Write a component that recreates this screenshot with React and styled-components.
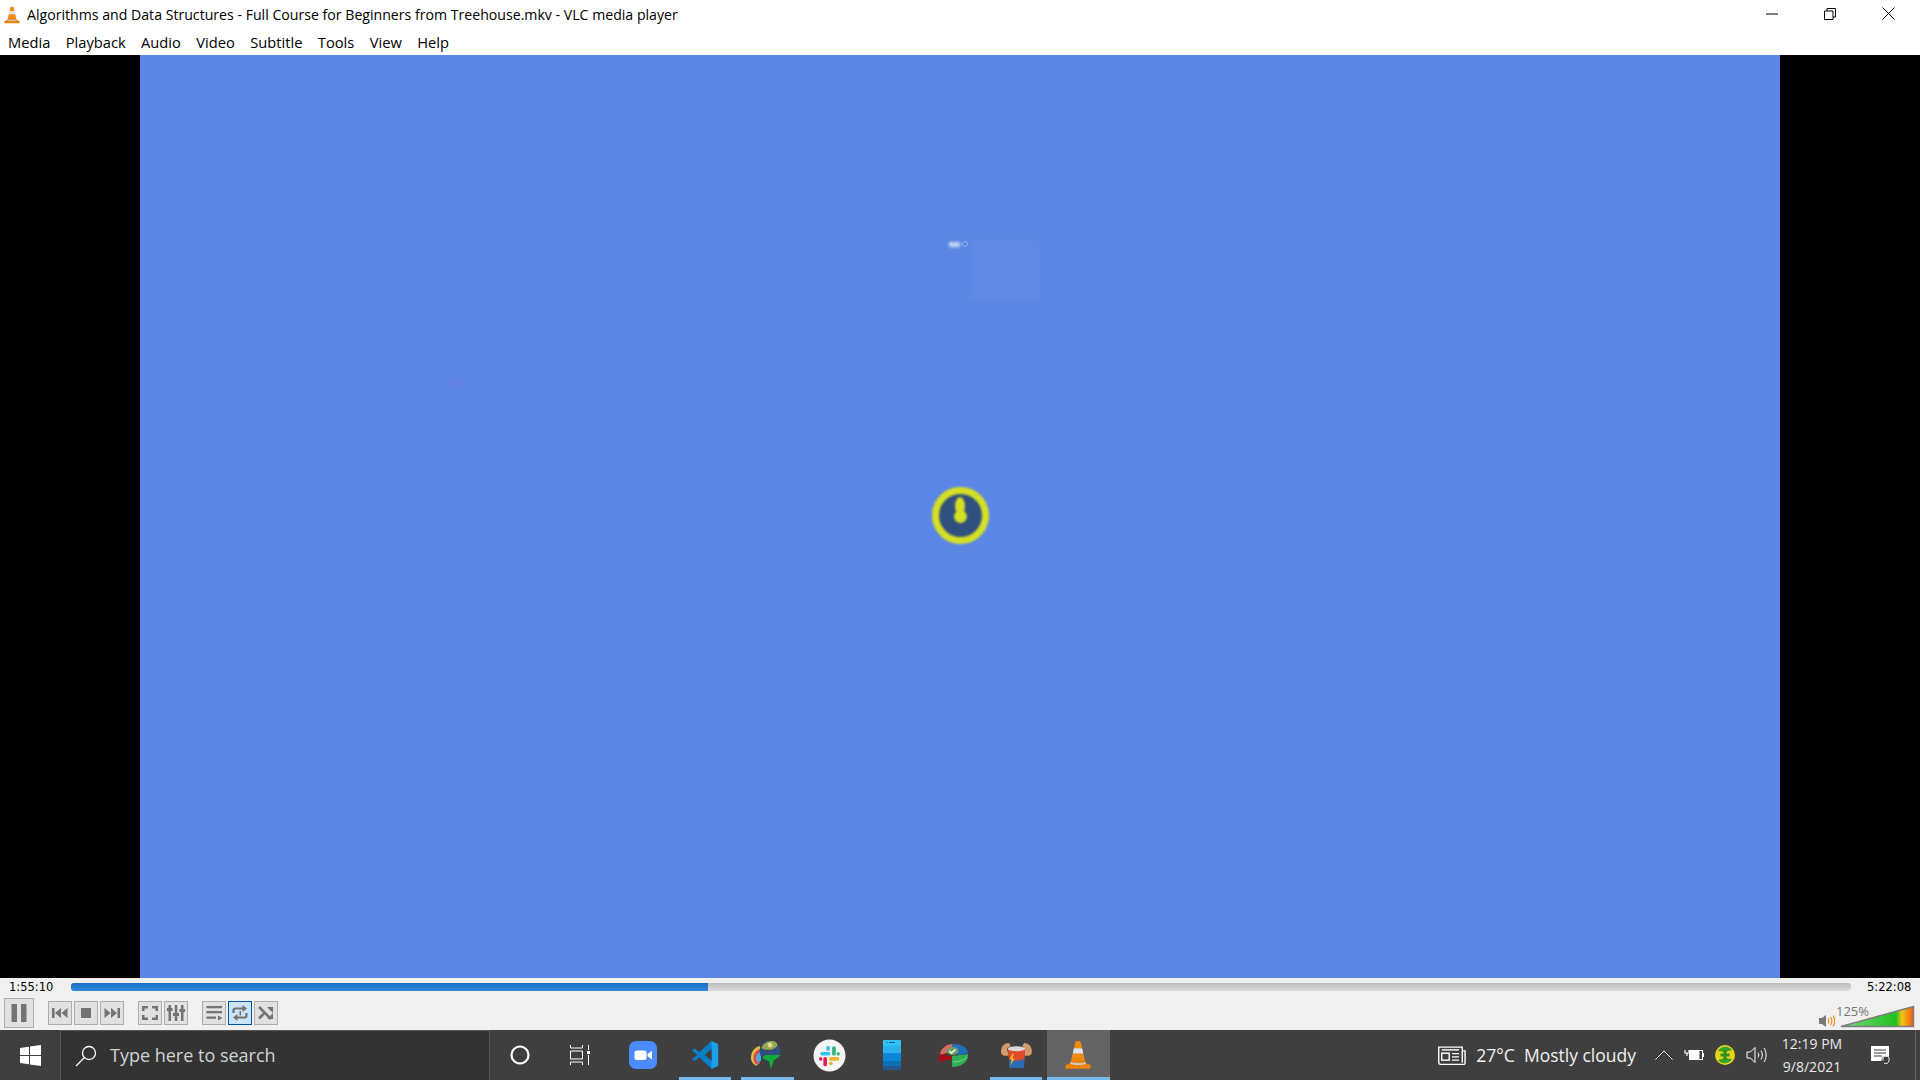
import React from 'react';
import styled, {createGlobalStyle} from 'styled-components';

const UI_FONT = '"Open Sans", "Noto Sans", sans-serif';
const MENU_ITEMS = ['Media', 'Playback', 'Audio', 'Video', 'Subtitle', 'Tools', 'View', 'Help'];

const GlobalStyle = createGlobalStyle`
    html, body {
        margin: 0;
        padding: 0;
        background: #000;
        overflow: hidden;
    }
    * {
        box-sizing: border-box;
    }
`;

const ConeIcon = ({size = 18}) => (
    <svg width={size} height={size} viewBox="0 0 24 24">
        <path d="M10 1h4l1.300 5.500H8.700z" fill="#f28a12"/>
        <path d="M8.700 6.500h6.600l1 4.500H7.700z" fill="#e2e2e2"/>
        <path d="M7.700 11h8.600l1.200 5h-11z" fill="#f08a14"/>
        <path d="M6.500 16h11l.8 2.500 3.700 1.500v3H2v-3l3.700-1.500z" fill="#ee8208"/>
        <path d="M6.200 17.500c2 1.200 9.600 1.200 11.600 0l.5 1.400c-2.500 1.500-10 1.500-12.600 0z" fill="#c9c9c9"/>
    </svg>
);

const PlayerIcon = ({name}) => {
    const shapes = {
        pause: <path d="M3.500 2H9v18H3.500zM13 2h5.500v18H13z"/>,
        prev: <path d="M3 6h2.500v10H3zM6 11l6-5v10zM12.500 11l6-5v10z"/>,
        stop: <path d="M6 6h10v10H6z"/>,
        next: <path d="M3.500 6l6 5-6 5zM10 6l6 5-6 5zM16.500 6H19v10h-2.500z"/>,
        full: <path d="M3 4h6v2.500H5.500V9H3zM13 4h6v5h-2.500V6.500H13zM3 13h2.500v2.500H9V18H3zM16.500 13H19v5h-6v-2.500h3.500z"/>,
        mixer: <path d="M3.500 3H6v3h1.500v3H6v10H3.500V9H2V6h1.500zM9.800 3h2.500v8H14v3h-1.700v5H9.800v-5H8v-3h1.800zM16 3h2.500v4H20v3h-1.500v9H16v-9h-1.500V7H16z"/>,
        list: <path d="M3.500 4H19v2.300H3.500zM3.500 9H19v2.300H3.500zM3.500 14.500H13v2.300H3.500zM15 13.500l4.500 2.500-4.500 2.500z"/>,
        loop: (
            <g>
                <path d="M4.500 11V8.500a2 2 0 012-2H14" fill="none" stroke="#737373" strokeWidth="2.200"/>
                <path d="M13.500 3l4.500 3.500-4.500 3.500z"/>
                <path d="M17.500 11v2.500a2 2 0 01-2 2H8" fill="none" stroke="#737373" strokeWidth="2.200"/>
                <path d="M8.500 12L4 15.500 8.500 19z"/>
                <path d="M10.500 9H12v4.500h-1.500z"/>
            </g>
        ),
        shuffle: (
            <g>
                <path d="M4 5l12 12" fill="none" stroke="#737373" strokeWidth="2.500"/>
                <path d="M12 5h6v6zM18 11v6h-6z"/>
                <path d="M4 16.500L9 11.500" fill="none" stroke="#737373" strokeWidth="2.500"/>
            </g>
        )
    };
    return <svg width="22" height="22" viewBox="0 0 22 22" fill="#737373">{shapes[name]}</svg>;
};

const ZoomIcon = () => (
    <svg width="28" height="28" viewBox="0 0 28 28">
        <rect width="28" height="28" rx="7" fill="#4a8cff"/>
        <rect x="5.500" y="9.500" width="12" height="9.500" rx="2" fill="#fff"/>
        <path d="M18.500 13l4.500-3.300v8.800L18.500 15z" fill="#fff"/>
    </svg>
);

const VsCodeIcon = () => (
    <svg width="30" height="30" viewBox="0 0 32 32">
        <path d="M23 1l7 3.500v23L23 31 10 18.500l-5 4-3-2 6-4.500-6-5 3-2 5 4z" fill="#0a7fc9"/>
        <path d="M23 1l7 3.500v23L23 31z" fill="#1d9fe8"/>
        <path d="M23 9.500l-7.500 6.500 7.500 6z" fill="#404040"/>
    </svg>
);

const IdmIcon = () => (
    <svg width="32" height="30" viewBox="0 0 32 30">
        <path d="M0 18c0-7 4-11 9-12v17c-3 1-3 3-3 3-3-1-6-4-6-8z" fill="#e4b93a"/>
        <path d="M2.500 18c0-5 3-8 6.500-9v14c-2 0-3 1-3 2-2-1-3.500-4-3.500-7z" fill="#cf4a57"/>
        <path d="M5 18c0-3 2-5 5-6v9c-2 0-3 1-3 2-1-1-2-3-2-5z" fill="#4fa9d5"/>
        <circle cx="19" cy="11" r="10.500" fill="#2f4d7e"/>
        <path d="M10.500 8c2-6 10-8.500 14-6 3 2 2.500 5-2 7-4 1.500-10 1-12-1z" fill="#95a94a"/>
        <circle cx="19" cy="5" r="2.500" fill="#d8d89a"/>
        <path d="M14 15h16l-7 5-3 9-2-8-7-3z" fill="#10ad33"/>
    </svg>
);

const SlackIcon = () => (
    <svg width="33" height="33" viewBox="0 0 32 32">
        <circle cx="16" cy="16" r="15.500" fill="#f4f4f4"/>
        <rect x="7" y="12.500" width="10" height="3.600" rx="1.800" fill="#36c5f0"/>
        <rect x="12.800" y="6.500" width="3.600" height="5" rx="1.800" fill="#36c5f0"/>
        <rect x="18.500" y="7" width="3.600" height="9" rx="1.800" fill="#2eb67d"/>
        <rect x="23" y="12.500" width="3" height="3.600" rx="1.500" fill="#2eb67d"/>
        <rect x="15.500" y="17.500" width="10" height="3.600" rx="1.800" fill="#ecb22e"/>
        <rect x="15.500" y="22" width="3.600" height="3.500" rx="1.800" fill="#ecb22e"/>
        <rect x="10" y="17.500" width="3.600" height="9" rx="1.800" fill="#e01e5a"/>
        <rect x="6" y="17.500" width="3" height="3.600" rx="1.500" fill="#e01e5a"/>
    </svg>
);

const PhoneIcon = () => (
    <svg width="18" height="30" viewBox="0 0 18 30">
        <path d="M1 0h16a1 1 0 011 1v5H0V1a1 1 0 011-1z" fill="#33c2f7"/>
        <rect y="6" width="18" height="7" fill="#2ab1ee"/>
        <rect y="13" width="18" height="8" fill="#0c86d6"/>
        <rect y="21" width="18" height="5" fill="#0a6fb5"/>
        <path d="M0 26h18v3a1 1 0 01-1 1H1a1 1 0 01-1-1z" fill="#24558c"/>
        <rect x="6" y="2" width="6" height="1" fill="#0f5c96"/>
        <rect x="3.500" y="2" width="1" height="1" fill="#0f5c96"/>
    </svg>
);

const DiskIcon = () => (
    <svg width="30" height="25" viewBox="0 0 30 25">
        <path d="M1 11C2 5 8 1 13 1v7L2 12z" fill="#d8695f"/>
        <path d="M0 11l13 2v3L1 19c-1-2-1-5-1-8z" fill="#a80d16"/>
        <path d="M13 1c8-.5 16 3 16 9l-9 2-7-4z" fill="#1f6fbf"/>
        <path d="M13 13l16-2c1 7-6 13-16 13z" fill="#2fae52"/>
        <path d="M14 19c6 0 11-2 14-5" stroke="#7ad58e" fill="none"/>
        <ellipse cx="13.500" cy="8" rx="6" ry="4" fill="#6f9e64"/>
        <path d="M10.500 8l2 2 4-3.500" stroke="#fff" strokeWidth="1.500" fill="none"/>
    </svg>
);

const CanIcon = () => (
    <svg width="31" height="27" viewBox="0 0 32 28">
        <path d="M0 10C0 5 3 1 8 1l2 3-4 3 2 7c-4 1-8 0-8-4zM32 10c0-5-3-9-8-9l-2 3 3 3-1 7c4 1 8 0 8-4z" fill="#d49a6a"/>
        <path d="M7 7h18l-1.500 20H9z" fill="#df4b2b"/>
        <path d="M8 18c4 2 12 2 16.200-1l-.7 10H9z" fill="#2a6bb7"/>
        <ellipse cx="16" cy="7" rx="9" ry="2.500" fill="#d9d9d9"/>
        <path d="M12 12l-3 6h2l-1 6 4-7h-2l1-5z" fill="#f2c029"/>
    </svg>
);

const NewsIcon = () => (
    <svg width="28" height="19" viewBox="0 0 30 20" fill="none" stroke="#fff" strokeWidth="1.500">
        <path d="M26 5h3v13a1.500 1.500 0 01-1.500 1.500H3A2.200 2.200 0 01.800 17.500V1h25.200v16.500"/>
        <path d="M4 4h18.500"/>
        <rect x="4" y="7.500" width="8" height="7.500"/>
        <path d="M15 8h7.500M15 11.500h7.500M15 15h7.500"/>
    </svg>
);

const BatteryIcon = () => (
    <svg width="20" height="14" viewBox="0 0 20 14">
        <path d="M1 2v3h4V2M3 5v3" stroke="#fff" strokeWidth="1.200" fill="none"/>
        <rect x="5.500" y="2.500" width="13" height="9" fill="none" stroke="#fff"/>
        <rect x="5.500" y="2.500" width="10" height="9" fill="#fff"/>
        <rect x="18.500" y="5" width="1.500" height="4" fill="#fff"/>
    </svg>
);

const GreenPlusIcon = () => (
    <svg width="20" height="20" viewBox="0 0 20 20">
        <circle cx="10" cy="10" r="10" fill="#e6d41c"/>
        <path d="M3 6a8.500 8.500 0 0114-1L10 7z" fill="#33a12c"/>
        <path d="M17 14a8.500 8.500 0 01-14 1l7-2z" fill="#33a12c"/>
        <path d="M8.500 5.500h3v3h3v3h-3v3h-3v-3h-3v-3h3z" fill="#2f8f22"/>
    </svg>
);

const SpeakerIcon = () => (
    <svg width="21" height="18" viewBox="0 0 21 18" fill="none" stroke="#fff" strokeWidth="1">
        <path d="M1 6h3.500L9 1.500v15L4.500 12H1z"/>
        <path d="M12 6.500c1 1.500 1 3.500 0 5M15 4.500c1.800 2.800 1.800 6.200 0 9M18 2c2.800 4 2.800 10 0 14"/>
    </svg>
);

const NotificationIcon = () => (
    <svg width="22" height="21" viewBox="0 0 22 21">
        <path d="M1 1h18v15H1z" fill="#fff"/>
        <path d="M4 5h12M4 8h12M4 11h8" stroke="#3d3d3d" strokeWidth="1"/>
        <circle cx="16" cy="15.500" r="4.500" fill="#3d3d3d"/>
        <path d="M13 15.500a3.200 3.200 0 116 0 3.200 3.200 0 01-5 2.500" stroke="#fff" fill="none"/>
    </svg>
);

const App = () => {
    const taskIcons = [
        [<ZoomIcon key="z"/>, false, false],
        [<VsCodeIcon key="v"/>, true, false],
        [<IdmIcon key="i"/>, true, false],
        [<SlackIcon key="s"/>, false, false],
        [<PhoneIcon key="p"/>, false, false],
        [<DiskIcon key="d"/>, false, false],
        [<CanIcon key="c"/>, true, false],
        [<ConeIcon key="l" size={30}/>, true, true]
    ];

    return (
        <Page>
            <GlobalStyle/>
            <TitleBar>
                <TitleLeft>
                    <ConeIcon/>
                    <TitleText>Algorithms and Data Structures - Full Course for Beginners from Treehouse.mkv - VLC media player</TitleText>
                </TitleLeft>
                <WindowButtons>
                    <WindowButton>
                        <svg width="12" height="12" viewBox="0 0 12 12"><path d="M0 6h12" stroke="#000"/></svg>
                    </WindowButton>
                    <WindowButton>
                        <svg width="12" height="12" viewBox="0 0 12 12" fill="none" stroke="#000"><path d="M.5 3h8.500v8.500H.5zM3 3V.5h8.500V9H9"/></svg>
                    </WindowButton>
                    <WindowButton>
                        <svg width="13" height="13" viewBox="0 0 13 13"><path d="M.5.500l12 12M12.500.500l-12 12" stroke="#000"/></svg>
                    </WindowButton>
                </WindowButtons>
            </TitleBar>
            <MenuBar>
                {MENU_ITEMS.map(label => <MenuItem key={label}>{label}</MenuItem>)}
            </MenuBar>
            <VideoArea>
                <VideoFrame>
                    <Smudge/>
                    <FaintPanel/>
                    <BlurLabel/>
                    <BlurDot/>
                    <Cursor>
                        <CursorBlob/>
                        <CursorHead/>
                    </Cursor>
                </VideoFrame>
            </VideoArea>
            <Controls>
                <SeekRow>
                    <TimeLabel>1:55:10</TimeLabel>
                    <SeekTrack>
                        <SeekFill/>
                    </SeekTrack>
                    <TimeLabel>5:22:08</TimeLabel>
                </SeekRow>
                <ButtonRow>
                    <ButtonGroup>
                        <PauseButton><PlayerIcon name="pause"/></PauseButton>
                    </ButtonGroup>
                    <ButtonGroup>
                        <CtrlButton><PlayerIcon name="prev"/></CtrlButton>
                        <CtrlButton><PlayerIcon name="stop"/></CtrlButton>
                        <CtrlButton><PlayerIcon name="next"/></CtrlButton>
                    </ButtonGroup>
                    <ButtonGroup>
                        <CtrlButton><PlayerIcon name="full"/></CtrlButton>
                        <CtrlButton><PlayerIcon name="mixer"/></CtrlButton>
                    </ButtonGroup>
                    <ButtonGroup>
                        <CtrlButton><PlayerIcon name="list"/></CtrlButton>
                        <CtrlButton active><PlayerIcon name="loop"/></CtrlButton>
                        <CtrlButton><PlayerIcon name="shuffle"/></CtrlButton>
                    </ButtonGroup>
                    <VolumeBox>
                        <svg width="16" height="14" viewBox="0 0 16 14">
                            <path d="M0 4h3l4-3v12l-4-3H0z" fill="#777"/>
                            <path d="M9 4.500c1 1.500 1 3.500 0 5M11.500 3c1.700 2.500 1.700 5.500 0 8M14 1.500c2.300 3.500 2.300 7.500 0 11" stroke="#f28a12" strokeWidth="1.200" fill="none"/>
                        </svg>
                        <VolumePercent>125%</VolumePercent>
                        <svg width="75" height="23" viewBox="0 0 75 23">
                            <defs>
                                <linearGradient id="vol" x1="0" x2="1" y1="0" y2="0">
                                    <stop offset="0" stopColor="#7fd67f"/>
                                    <stop offset="0.76" stopColor="#1fc21f"/>
                                    <stop offset="0.84" stopColor="#f4c414"/>
                                    <stop offset="1" stopColor="#ee5a12"/>
                                </linearGradient>
                            </defs>
                            <path d="M1 21.500L73.500 1.500v20z" fill="url(#vol)" stroke="#7d7d7d" strokeWidth="1.500"/>
                        </svg>
                    </VolumeBox>
                </ButtonRow>
            </Controls>
            <Taskbar>
                <StartButton>
                    <svg width="21" height="21" viewBox="0 0 21 21" fill="#fff">
                        <path d="M0 3l9-1.300V10H0zM10 1.500L21 0v10H10zM0 11h9v8.300L0 18zM10 11h11v10l-11-1.500z"/>
                    </svg>
                </StartButton>
                <SearchBox>
                    <svg width="22" height="22" viewBox="0 0 22 22" fill="none" stroke="#fff" strokeWidth="1.300">
                        <circle cx="14" cy="8" r="6.500"/>
                        <path d="M9.500 12.500L1 21"/>
                    </svg>
                    <SearchText>Type here to search</SearchText>
                </SearchBox>
                <SystemSlot>
                    <svg width="20" height="20" viewBox="0 0 20 20"><circle cx="10" cy="10" r="8.500" fill="none" stroke="#fff" strokeWidth="2.200"/></svg>
                </SystemSlot>
                <SystemSlot>
                    <svg width="20" height="20" viewBox="0 0 20 20" fill="none" stroke="#fff">
                        <path d="M.5 0v3h12V0M.5 20v-3h12v3M.5 6h12v8H.5zM18.500 0v5M18.500 10v10"/>
                        <rect x="17" y="6" width="3" height="3" fill="#fff" stroke="none"/>
                    </svg>
                </SystemSlot>
                <AppSlots>
                    {taskIcons.map(([icon, running, current], i) => (
                        <TaskSlot key={i} running={running} current={current}>{icon}</TaskSlot>
                    ))}
                </AppSlots>
                <Tray>
                    <NewsIcon/>
                    <Weather>27°C&nbsp; Mostly cloudy</Weather>
                    <TrayIcons>
                        <svg width="18" height="10" viewBox="0 0 18 10"><path d="M.5 9.500L9 1l8.500 8.500" fill="none" stroke="#fff"/></svg>
                        <BatteryIcon/>
                        <GreenPlusIcon/>
                        <SpeakerIcon/>
                    </TrayIcons>
                    <Clock>
                        <span>12:19 PM</span>
                        <span>9/8/2021</span>
                    </Clock>
                    <NotificationSlot><NotificationIcon/></NotificationSlot>
                    <ShowDesktop/>
                </Tray>
            </Taskbar>
        </Page>
    );
};

export default App;

const Page = styled.div `
    width: 1920px;
    height: 1080px;
    display: flex;
    flex-direction: column;
    font-family: ${UI_FONT};
    overflow: hidden;
`;
const TitleBar = styled.div `
    height: 30px;
    flex: none;
    background: #fff;
    display: flex;
    align-items: center;
    justify-content: space-between;
`;
const TitleLeft = styled.div `
    display: flex;
    align-items: center;
    padding-left: 3px;
    gap: 6px;
`;
const TitleText = styled.span `
    font-size: 14.130px;
    color: #000;
    white-space: nowrap;
    position: relative;
    top: -1px;
`;
const WindowButtons = styled.div `
    display: flex;
    height: 30px;
    padding: 0 3px 3px 0;
`;
const WindowButton = styled.div `
    width: 58px;
    display: flex;
    align-items: center;
    justify-content: center;
`;
const MenuBar = styled.div `
    height: 25px;
    flex: none;
    background: #fff;
    display: flex;
    align-items: center;
    padding: 0 0 2px 8px;
    gap: 15.400px;
`;
const MenuItem = styled.span `
    font-size: 14.700px;
    color: #000;
`;
const VideoArea = styled.div `
    flex: 1;
    min-height: 0;
    background: #000;
    display: flex;
    justify-content: center;
`;
const VideoFrame = styled.div `
    width: 1640px;
    height: 100%;
    background: #5b86e5;
    position: relative;
`;
const Smudge = styled.div `
    position: absolute;
    left: 305px;
    top: 327px;
    width: 22px;
    height: 3px;
    background: #6a7fe6;
    filter: blur(1.500px);
`;
const FaintPanel = styled.div `
    position: absolute;
    left: 830px;
    top: 185px;
    width: 70px;
    height: 60px;
    background: #6089e8;
    filter: blur(3px);
`;
const BlurLabel = styled.div `
    position: absolute;
    left: 809px;
    top: 187px;
    width: 11px;
    height: 5px;
    background: #c4daf4;
    filter: blur(1.500px);
`;
const BlurDot = styled.div `
    position: absolute;
    left: 822px;
    top: 186px;
    width: 6px;
    height: 6px;
    border-radius: 50%;
    border: 1.500px solid #8fb0ee;
    filter: blur(.6px);
`;
const Cursor = styled.div `
    position: absolute;
    left: 792px;
    top: 432px;
    width: 57px;
    height: 57px;
    border-radius: 50%;
    background: #2f4f7f;
    border: 7.500px solid #d6e025;
    filter: blur(.8px);
`;
const CursorBlob = styled.div `
    position: absolute;
    left: 14.500px;
    top: 16px;
    width: 13px;
    height: 13px;
    border-radius: 50%;
    background: #d6e025;
`;
const CursorHead = styled.div `
    position: absolute;
    left: 16px;
    top: 3px;
    width: 10px;
    height: 18px;
    border-radius: 50%;
    background: #d6e025;
`;
const Controls = styled.div `
    height: 52px;
    flex: none;
    background: #f0f0f0;
    display: flex;
    flex-direction: column;
`;
const SeekRow = styled.div `
    height: 20px;
    display: flex;
    align-items: center;
    padding: 0 7px 2px 9px;
    gap: 16px;
`;
const TimeLabel = styled.span `
    font-family: "DejaVu Sans", sans-serif;
    font-size: 11.500px;
    color: #000;
    width: 46px;
    white-space: nowrap;
`;
const SeekTrack = styled.div `
    flex: 1;
    height: 8px;
    border-radius: 3px;
    background: linear-gradient(#bcbcbc, #dedede);
    overflow: hidden;
`;
const SeekFill = styled.div `
    width: 35.800%;
    height: 100%;
    background: linear-gradient(#1a6fc4, #2f8ae0);
`;
const ButtonRow = styled.div `
    height: 30px;
    display: flex;
    align-items: center;
    padding-left: 4px;
    gap: 14px;
`;
const ButtonGroup = styled.div `
    display: flex;
    gap: 2px;
`;
const CtrlButton = styled.div `
    width: 24px;
    height: 24px;
    display: flex;
    align-items: center;
    justify-content: center;
    background: ${props => props.active ? '#cce4f7' : '#e1e1e1'};
    border: 1px solid ${props => props.active ? '#005499' : '#adadad'};
`;
const PauseButton = styled(CtrlButton)`
    width: 30px;
    height: 30px;
`;
const VolumeBox = styled.div `
    margin: 6px 0 0 auto;
    padding-right: 5px;
    display: flex;
    align-items: flex-end;
    gap: 5px;
    position: relative;
`;
const VolumePercent = styled.span `
    position: absolute;
    left: 17px;
    top: -3px;
    font-size: 13px;
    color: #777;
`;
const Taskbar = styled.div `
    height: 50px;
    flex: none;
    background: #3f3f3f;
    display: flex;
    align-items: stretch;
`;
const StartButton = styled.div `
    width: 60px;
    display: flex;
    align-items: center;
    justify-content: center;
`;
const SearchBox = styled.div `
    width: 430px;
    background: #333;
    border: 1px solid #565656;
    border-width: 1px 1px 0;
    display: flex;
    align-items: center;
    padding-left: 14px;
    gap: 13px;
`;
const SearchText = styled.span `
    font-size: 18px;
    color: #cfd3d6;
    position: relative;
    top: -1px;
`;
const SystemSlot = styled.div `
    width: 60px;
    display: flex;
    align-items: center;
    justify-content: center;
`;
const AppSlots = styled.div `
    display: flex;
    padding-left: 2px;
`;
const TaskSlot = styled.div `
    width: 62.200px;
    display: flex;
    align-items: center;
    justify-content: center;
    position: relative;
    background: ${props => props.current ? '#636363' : 'transparent'};
    &::after {
        content: "";
        display: ${props => props.running ? 'block' : 'none'};
        position: absolute;
        bottom: 0;
        left: ${props => props.current ? '0' : '5px'};
        right: ${props => props.current ? '0' : '5px'};
        height: 3px;
        background: #76b9ed;
    }
`;
const Tray = styled.div `
    flex: 1;
    display: flex;
    align-items: center;
    justify-content: flex-end;
    color: #fff;
`;
const Weather = styled.span `
    font-size: 17.500px;
    margin: 0 19px 0 10px;
    color: #f0f0f0;
    white-space: nowrap;
`;
const TrayIcons = styled.div `
    display: flex;
    align-items: center;
    gap: 11px;
`;
const Clock = styled.div `
    display: flex;
    flex-direction: column;
    align-items: center;
    font-size: 14px;
    line-height: 23px;
    color: #e8e8e8;
    margin-left: 11px;
    width: 68px;
    white-space: nowrap;
`;
const NotificationSlot = styled.div `
    width: 69px;
    display: flex;
    justify-content: center;
`;
const ShowDesktop = styled.div `
    width: 5px;
    height: 100%;
    border-left: 1px solid #666;
`;
